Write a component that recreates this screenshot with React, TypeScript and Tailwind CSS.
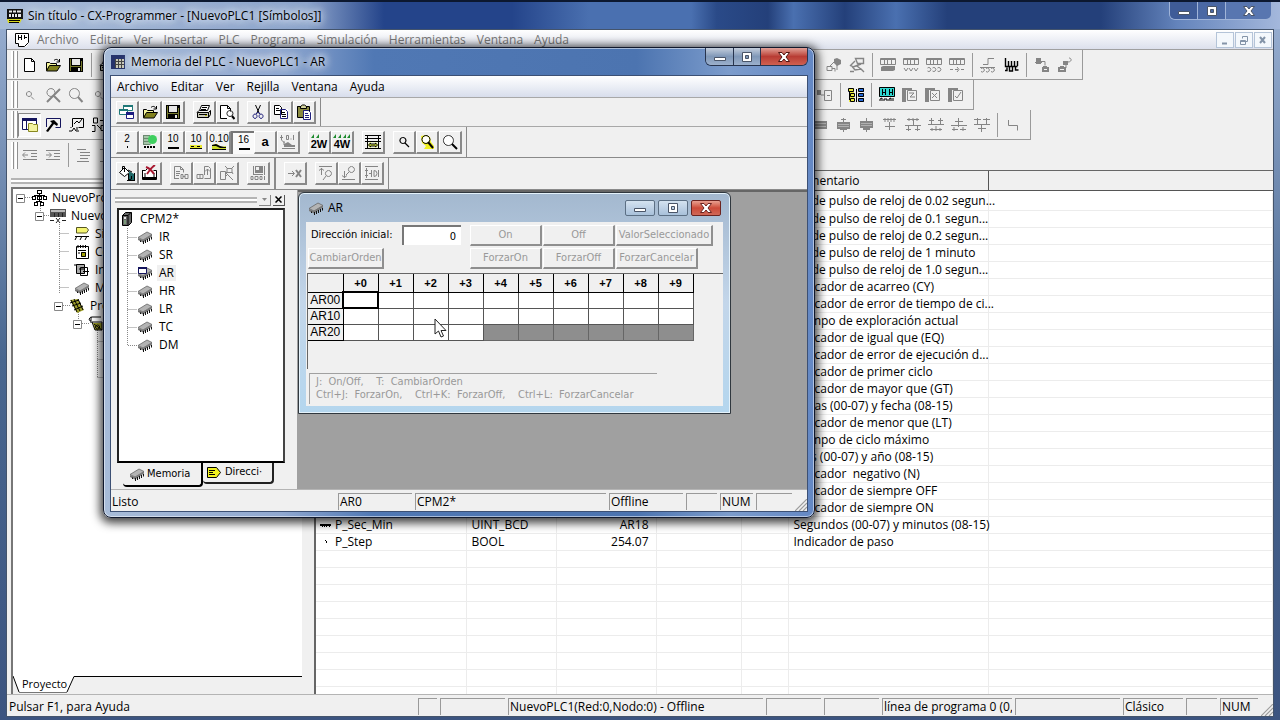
import React from "react";

type Layer = ["s" | "f", string, string, number?];

function Glyph({ layers, size = 16 }: { layers: Layer[]; size?: number }) {
  return (
    <svg width={size} height={size} viewBox="0 0 16 16" className="shrink-0" aria-hidden="true">
      {layers.map(([kind, color, d, w], i) =>
        kind === "s" ? (
          <path key={i} d={d} fill="none" stroke={color} strokeWidth={w ?? 1} />
        ) : (
          <path key={i} d={d} fill={color} />
        ),
      )}
    </svg>
  );
}

const K = "#000";
const G = "#858585";

const icons: Record<string, Layer[]> = {
  app: [
    ["f", "#111", "M0 1h16v10h-16z"],
    ["f", "#e8e8e8", "M2 2.500h3v2h-3zM6 2.500h3v2h-3zM10 2.500h4v2h-4zM2 6h12v3h-12z"],
    ["f", K, "M4 6h1v3h-1zM7 6h1v3h-1zM10 6h1v3h-1z"],
    ["f", "#d8d820", "M0 11h15l-2 4h-12z"],
    ["s", K, "M2 12.500h11M2 14.500h10"],
  ],
  ladder: [
    ["f", "#fff", "M1 1h14v10l-3 4h-8v-3h-3z"],
    ["s", K, "M1.500 11.500v-10h13v9l-4 4h-6v-3zM4.500 3v5M7.500 3v5M10.500 3v4M4 5.500h4M10 5.500h3"],
  ],
  grid: [
    ["f", "#26336b", "M1 1h14v14h-14z"],
    ["f", "#c8c8b8", "M2 5h12v9h-12z"],
    ["s", "#444", "M5.500 5v9M8.500 5v9M11.500 5v9M2 7.500h12M2 10.500h12"],
    ["f", "#26336b", "M2 5h3v9h-3z"],
  ],
  doc: [
    ["f", "#fff", "M3 1h7l3 3v11h-10z"],
    ["s", K, "M2.500 1.500h7l3 3v10h-10zM9.500 1.500v3h3"],
  ],
  open: [
    ["s", K, "M9 3.500c2-2 4-1 5 1M14.500 2v3h-3"],
    ["f", "#f4f49a", "M1 6h4l1 1h6v7h-11z"],
    ["s", K, "M1.500 13.500v-8h3l1 1h6v2"],
    ["f", "#80801c", "M4 9h11l-3 5h-11z"],
    ["s", K, "M4.500 8.500h11l-3.500 5.500h-10.500z"],
  ],
  save: [
    ["f", K, "M1 1h14v14h-14z"],
    ["f", "#777a2c", "M2 2h1v12h-1zM13 4h1v10h-1zM2 9h12v1h-12z"],
    ["f", "#e6e6e6", "M4 2h8v6h-8zM10 11h2v3h-2z"],
  ],
  print: [
    ["f", "#fff", "M5 1h8l-2 6h-8z"],
    ["s", K, "M5.500 1.500h8l-2 5h-8zM6 3.500h5M5 5.500h5"],
    ["f", "#c8c8b8", "M1 8h12l2-2v5l-3 3h-11z"],
    ["s", K, "M1.500 8.500h11v5h-11zM12.500 8.500l2-2v4l-2 3M3 10.500h8M3 6.500l-2 2"],
    ["f", "#b4b400", "M9 11h2v1h-2z"],
  ],
  preview: [
    ["f", "#fff", "M2 1h7l3 3v11h-10z"],
    ["s", K, "M8 14.500h-6.500v-13h7l3 3v3M8.500 1.500v3h3"],
    ["s", "#222", "M11 6.500a3 3 0 1 1-.1 0"],
    ["s", K, "M13 12l2.500 3", 2],
  ],
  cut: [
    ["s", K, "M5.500 1l4 9M10.500 1l-4 9"],
    ["s", "#20207c", "M5 10a2 2.200 0 1 0 .1 0M11 10a2 2.200 0 1 0 .1 0M6 10l2-2 2 2"],
  ],
  copy: [
    ["f", "#fff", "M1 2h8v9h-8zM7 5h8v9h-8z"],
    ["s", K, "M1.500 1.500h5l2 2v7h-7zM3 4.500h3M3 6.500h4"],
    ["s", "#20207c", "M7.500 5.500h5l2 2v7h-7z"],
    ["s", K, "M9 8.500h3M9 10.500h4M9 12.500h4"],
  ],
  paste: [
    ["f", "#8a8a40", "M1 2h12v11h-12z"],
    ["s", K, "M1.500 2.500h12v11h-12z"],
    ["f", "#d8d8a0", "M5 1h5v3h-5z"],
    ["s", K, "M4.500 4.500v-2l2-1.500h2l2 1.500v2z"],
    ["f", "#fff", "M8 7h8v9h-8z"],
    ["s", "#20207c", "M7.500 6.500h5l2 2v7h-7zM9 9.500h3M9 11.500h4M9 13.500h4"],
  ],
  windows: [
    ["f", "#fff", "M4 1h9v6h-9zM0 6h8v5h-8zM8 9h7v6h-7z"],
    ["s", "#1f7878", "M4.500 1.500h9v5h-9zM.5 5.500h8v5h-8z"],
    ["f", "#1f7878", "M4 1h10v2h-10zM0 5h9v2h-9z"],
    ["s", "#1c1c80", "M7.500 8.500h7v6h-7z"],
    ["f", "#1c1c80", "M7 8h8v3h-8z"],
  ],
  led: [
    ["f", "#a4c4a8", "M1 2h8v9h-8z"],
    ["s", "#6c8870", "M1 1.500h7M2 4.500h6M2 7.500h6M1 10.500h7M1.500 2v8"],
    ["f", "#3fcf5f", "M10.500 1a4.500 4.500 0 1 1 0 9a4.500 4.500 0 1 1 0-9"],
    ["f", K, "M2 12h2v2h-2zM5 12h2v2h-2zM8 12h2v2h-2zM11 12h2v2h-2z"],
  ],
  chart: [
    ["s", G, "M1.500 1v5l3 3M0 3.500h3M6.500 1.500h2v4h-2zM10.500 5h1M13.500 1v5"],
    ["s", G, "M4 7v4M2 14.500h13"],
    ["f", G, "M4 10l4-2 4 3h3v2h-11z"],
  ],
  fit: [
    ["s", K, "M0 1.500h16M0 4.500h16M2.500 1v13M13.500 1v13M0 14.500h16M0 7.500h16"],
    ["f", "#eef2d8", "M3 8h10v6h-10z"],
    ["f", "#d8e840", "M3 11l3-3v2h4v-2l3 3-3 3v-2h-4v2z"],
    ["s", K, "M3.500 11l2-2v1h5v-1l2 2-2 2v-1h-5v1z"],
  ],
  zoomS: [["s", K, "M7 3.500a3 3 0 1 1-.1 0M9 9l4 4", 1.2]],
  zoomY: [
    ["f", "#f0f020", "M2 2l5-1 4 2 1 5 3 4v3h-10l2-3-4-3z"],
    ["f", "#fff", "M7 2a3.500 3.500 0 1 1-.1 0"],
    ["s", K, "M7 1.500a4 4 0 1 1-.1 0"],
    ["s", K, "M9 8l5 6", 2],
  ],
  zoomL: [
    ["f", "#fff", "M6.500 1.500a5 5 0 1 1-.1 0"],
    ["s", "#333", "M6.500 1.500a5 5 0 1 1-.1 0"],
    ["s", K, "M10 10l5 5", 2],
  ],
  zoomSG: [["s", G, "M7 4.500a2.500 2.500 0 1 1-.1 0M9 9.500l3 3"]],
  zoomXG: [
    ["s", G, "M6 1.500a4 4 0 1 1-.1 0"],
    ["s", G, "M2 15l13-13M8 8l7 7", 2],
  ],
  zoomLG: [
    ["s", G, "M6.500 1.500a5 5 0 1 1-.1 0"],
    ["s", G, "M10 10l4.500 5", 2],
  ],
  paint: [
    ["f", "#fff", "M1 7l5-5 5 5-5 5z"],
    ["s", K, "M.5 7.500l5-5 5 5-5 4zM5.500 7v-5.500h-2v3"],
    ["f", "#1f6868", "M10 6l5 3v6h-5z"],
    ["s", K, "M8 15.500h8M15.500 8v7M9.500 9v6l3-1v-3M9 5l4 2"],
  ],
  erase: [
    ["f", "#fff", "M1 5h13v9h-13z"],
    ["s", K, "M.5 5.500h3l2-2M.5 5v9.500h14v-9h-3M3 8v4M12 8v4"],
    ["f", K, "M1 12h13v3h-13z"],
    ["s", "#a81830", "M4 2c3 1 6 4 8 7M13 0c-3 2-6 6-8 9", 2],
  ],
  docGlasses: [
    ["s", G, "M1.500 13.500v-12h6l3 3v3M7.500 1.500v3h3M3 6.500h4M3 8.500h4M3 10.500h3M1 13.500h5M8 9.500h2v4h-2zM12 9.500h3v4h-3zM10 11.500h2"],
  ],
  docUp: [["s", G, "M8.500 10v-8.500h4l2 2v10h-6M11.500 4v6M9 6.500l2.500-2.500 2.500 2.500M1 9.500h6v4h-6zM4 9v4"]],
  docX: [["s", G, "M1.500 14.500v-8h5v8zM7 7.500h3M7 8l7 7M8 3.500h5v4h-5zM6 1l2 2M15 1l-2 2M6 12l3-3M14 9l-1-2"]],
  monitorG: [
    ["f", G, "M5 1h8v7h-8z"],
    ["s", G, "M3.500 1v8M3 9.500h10M14.500 1v9M1 11.500h2v3h-2zM5 11.500h3v3h-3zM10 11.500h2v3h-2zM14.500 11v4"],
    ["f", "#f0f0f0", "M6 2h3v3h-3z"],
  ],
  toX: [["s", G, "M1 8.500h6M5 6l2.500 2.500-2.500 2.500"], ["s", G, "M9 5l5 7M14 5l-5 7", 2]],
  topFind: [["s", G, "M1 1.500h13M3.500 3v7M1 5.500l2.500-2 2.500 2M10.500 5.500a3 3 0 1 1-.1 0M8 11l-3 4"]],
  botFind: [["s", G, "M1 14.500h13M3.500 6v7M1 10.500l2.500 2 2.500-2M10.500 1.500a3 3 0 1 1-.1 0M8 7l-3 3"]],
  bothFind: [["s", G, "M1 1.500h13M1 14.500h13M2.500 3v10M1 5.500h3M1 10.500h3M5 8.500h2M7.500 5v7M10 5.500a3 3 0 1 1 0 6zM14.500 5v7"]],
  wnd: [
    ["f", "#fff", "M1 1h13v12h-13z"],
    ["s", "#14145c", "M.5 1.500h14v11h-14zM4.500 4v9"],
    ["f", "#14145c", "M0 1h15v3h-15z"],
    ["f", "#f4f4a0", "M7 7h4l1 1h4v7h-9z"],
    ["s", "#888820", "M6.500 14.500v-8h4l1 1h4v7z"],
  ],
  hammer: [
    ["s", "#14145c", "M1.500 10v-8.500h14v9h-5"],
    ["f", K, "M5 4l4-1 4 4-1 2-3-2-6 8-2-1 6-8z"],
  ],
  plot: [["s", K, "M4.500 10v-8.500h11v9h-5M6 7l3-3 2 2 3-4M1 14h3l2-3 2 3h3M3 11v-1M9 10v3"]],
  links: [["s", K, "M2.500 1v5h4v-5zM1 8.500h3v6h-3M9 3.500h5v5M6 8l4 4M10 8.500h5v5h-5z"]],
  outdent: [["s", G, "M1 8h5M3 5.500l-2.500 2.500 2.500 2.500M1 3.500h14M9 6.500h6M9 9.500h6M1 12.500h14"]],
  indent: [["s", G, "M1 8h5M4 5.500l2.500 2.500-2.500 2.500M1 3.500h14M9 6.500h6M9 9.500h6M1 12.500h14"]],
  lines: [["s", G, "M1 2.500h9M4 5.500h10M4 8.500h10M4 11.500h8M1 14.500h12"]],
  tool1: [
    ["f", G, "M8 2l3-1 4 2v4l-4 2-3-3z"],
    ["s", G, "M1 9.500h5v4h-5zM6 11.500h3v3M4 9l5-5M11 8v5"],
  ],
  tool2: [["s", G, "M6.500 1.500h8v5h-6zM1 9l5-5M2 8l4 5 6-1 3 3M4 10l8-3M1 14.500h4M8 9l5 4", 1.4]],
  plcG1: [["s", G, "M.5 1.500h15v6h-15zM4.500 3v4M7.500 3v4M11.500 3v4M1 2.500h14"], ["f", G, "M1 10l2-1h12v4l-2 1h-12z"]],
  plcG2: [["s", G, "M.5 1.500h15v6h-15zM4.500 3v4M7.500 3v4M11.500 3v4M1 2.500h14M1 11l2 3 2-3M6 11l2 3 2-3M11 11l2 3 2-3"]],
  plcG3: [["s", G, "M.5 1.500h15v6h-15zM4.500 3v4M7.500 3v4M11.500 3v4M1 2.500h14M1.500 11a2 2 0 1 1 0 3M6.500 11a2 2 0 1 1 0 3M11.500 11a2 2 0 1 1 0 3"]],
  plcG4: [["s", G, "M.5 1.500h15v6h-15zM4.500 3v4M7.500 3v4M11.500 3v4M1 2.500h14M1 12.500h3M6 12.500h3M8 10l2 2.500-2 2.500M12 12.500h3"]],
  stepG: [["s", G, "M3 7.500h5v-6h6M1 11.500a2 2 0 1 1 0 3M6 11.500a2 2 0 1 1 0 3M11 11.500a2 2 0 1 1 0 3M0 10.500h15"]],
  wave: [["s", K, "M2.500 1v8.500h12M5.500 4v5M8.500 4v5M11.500 4v5M14.500 4v5M2 13.500h2v-3M6.500 10v4h3v-4M12.500 10v3h3", 1.4]],
  tool3: [["f", G, "M2 1h5v6h-5zM8 10h7v5h-7z"], ["s", G, "M1 5.500h7M7 4.500h4v4M9 9.500h4"], ["s", "#f0f0f0", "M10 12.500h3"]],
  tool4: [["f", G, "M6 4h5v4h-5zM1 10h8v5h-8z"], ["s", G, "M11 5c4 0 4-4 1-4M9 8v3M3 9.500h4"], ["s", "#f0f0f0", "M3 12.500h4"]],
  arrowDoc: [["f", G, "M0 3h4v5h-4z"], ["s", G, "M7.500 3.500h7v10h-7zM4 8h4M10 8.500h3"]],
  tree: [
    ["f", "#e8e840", "M1 1h5v14h-5z"],
    ["s", K, "M.5 1.500h5v3h-5zM2.500 6.500h4v3h-4zM2.500 11.500h4v3h-4zM1.500 4v9M8.500 2v13"],
    ["f", "#2468d8", "M11 1h5v4h-5zM11 6h5v4h-5zM11 11h5v4h-5z"],
    ["s", K, "M10.500 1.500h5v3h-5zM10.500 6.500h5v3h-5zM10.500 11.500h5v3h-5z"],
  ],
  hh: [
    ["f", "#30d8d0", "M0 0h16v10h-16z"],
    ["s", K, "M3.500 2v6M6.500 2v6M10.500 2v6M13.500 2v6M3 5.500h4M10 5.500h4M.5 .5h15v9h-15zM1 14v-2l2-1v3M5 14v-2h3v2M10 14v-2l2-1v3M14 14v-3"],
  ],
  docZ: [["f", G, "M0 1h10v2h-6v12h-4z"], ["s", G, "M5.500 3.500h9v10h-9zM7 6h5l-4 4h5"]],
  docXX: [["f", G, "M0 1h10v2h-6v12h-4z"], ["s", G, "M5.500 3.500h9v10h-9zM7 6l5 5M12 6l-5 5"]],
  docV: [["f", G, "M0 1h10v2h-6v12h-4z"], ["s", G, "M5.500 3.500h9v10h-9zM7 9l2 2 4-6"]],
  chipG: [["f", G, "M1 4h13v8h-13z"], ["s", "#ccc", "M2 6.500h11M2 9.500h11", 0.6]],
  chipG2: [["f", G, "M1 5h13v7h-13zM7 1h1v14h-1zM5 2h5v1h-5zM4 12h7v1h-7z"], ["s", "#ccc", "M2 7.500h11M2 9.500h11", 0.6]],
  chipG3: [["f", G, "M1 4h13v7h-13zM7 1h1v14h-1zM4 11h7v2h-7z"], ["s", "#ccc", "M2 6.500h11M2 8.500h11", 0.6]],
  rungA: [["s", G, "M1 2.500h13M3 1v4M6 1v4M9 1v4M12 1v4M7.500 5v8M3 9.500h10"]],
  rungB: [["s", G, "M2 2.500h12M4 1v3M8 1v3M12 1v3M8.500 3v5M0 8.500h16M3.500 8v6M12.500 8v6M1 12.500h5M10 12.500h5"]],
  rungC: [["s", G, "M3.500 1v6M12.500 1v6M1 3.500h5M10 3.500h5M0 7.500h16M2 12.500h12M4 11v3M8 9v5M12 11v3"]],
  rungD: [["s", G, "M7.500 1v9M4 4.500h8M0 8.500h16M1 12.500h6M9 12.500h6M3 10v4M12 10v4"]],
  rungE: [["s", G, "M0 2.500h7M9 2.500h7M3.500 1v6M12.500 1v6M0 7.500h16M7.500 8v7M4 11.500h8"]],
  corner: [["s", G, "M3.500 3v5.500h9v5"]],
};

function MemChip({ open = false }: { open?: boolean }) {
  return (
    <svg width="16" height="16" viewBox="0 0 16 16" className="shrink-0" aria-hidden="true">
      <path d="M1 8.500L10 3L15 5.500L6 11Z" fill="#b4b4b4" stroke="#666" strokeWidth=".8" />
      <path d="M1 9v2l5 2.500v-2.500zM6 11l9-5.500v2l-9 6z" fill="#777" />
      <path d="M6.500 12v3M8.500 11v3M10.500 10v3M12.500 9v3M14.500 8v2.500M3.500 11.500v1.500" stroke="#111" />
      {open && <path d="M1.500 2.500h8v6h-8z" fill="#fff" stroke="#14145c" />}
      {open && <path d="M1 2h9v2h-9z" fill="#14145c" />}
    </svg>
  );
}

/* ---------- window caption buttons ---------- */

function CaptionGlyph({ kind, tint = "#4a5568" }: { kind: string; tint?: string }) {
  return (
    <svg width="14" height="12" viewBox="0 0 14 12" aria-hidden="true">
      {kind === "min" && <path d="M1.500 6.500h11v3h-11z" fill="#fff" stroke={tint} />}
      {kind === "max" && (
        <path d="M2.500 1.500h9v9h-9zM5.500 4.500v3h3v-3z" fill="#fff" fillRule="evenodd" stroke={tint} />
      )}
      {kind === "close" && (
        <path d="M1.500 1.500h3.500l2 2.500 2-2.500h3.500l-3.500 4.500 3.500 4.500h-3.500l-2-2.500-2 2.500h-3.500l3.500-4.500z" fill="#fff" stroke={tint} />
      )}
    </svg>
  );
}

/* ---------- toolbar parts ---------- */

function FlatTool({ name, pressed = false }: { name: string; pressed?: boolean }) {
  return (
    <button
      aria-label={name}
      className={
        pressed
          ? "flex h-6 w-[23px] shrink-0 items-center justify-center border border-r-white border-b-white border-t-[#888] border-l-[#888] bg-[#f8f8f8]"
          : "flex h-6 w-[23px] shrink-0 items-center justify-center"
      }
    >
      <Glyph layers={icons[name]} />
    </button>
  );
}

function Sep() {
  return <span className="mr-[3px] ml-1 h-6 w-px shrink-0 bg-[#9a9a9a]" />;
}

function Grip() {
  return (
    <span className="flex h-[27px] shrink-0 gap-px pl-1">
      <span className="w-[3px] border-r border-[#909090] bg-white" />
      <span className="w-[3px] border-r border-[#909090] bg-white" />
    </span>
  );
}

function MainBar({
  left,
  right,
  pad,
}: {
  left: (string | null)[];
  right: (string | null)[];
  pad: string;
}) {
  return (
    <div className="flex h-[30px] shrink-0 items-stretch">
      <div className={`flex shrink-0 items-center border-b border-[#9a9a9a] ${pad}`}>
        <Grip />
        {left.map((n, i) => (n === null ? <Sep key={i} /> : <FlatTool key={i} name={n} pressed={n === "wnd"} />))}
      </div>
      <div className="flex shrink-0 items-center border-r border-b border-[#9a9a9a] pr-1.5">
        {right.map((n, i) => (n === null ? <Sep key={i} /> : <FlatTool key={i} name={n} />))}
      </div>
    </div>
  );
}

function RaisedTool({
  label,
  pressed = false,
  children,
}: {
  label: string;
  pressed?: boolean;
  children: React.ReactNode;
}) {
  return (
    <button
      aria-label={label}
      className={
        pressed
          ? "flex h-[23px] w-[23px] shrink-0 items-center justify-center border-t-2 border-l-2 border-[#777] bg-[#fafafa]"
          : "flex h-[23px] w-[23px] shrink-0 items-center justify-center border-t border-r-2 border-b-2 border-l border-t-white border-r-[#8a8a8a] border-b-[#8a8a8a] border-l-white bg-[#f0f0f0]"
      }
    >
      {children}
    </button>
  );
}

function IconTool({ name }: { name: string }) {
  return (
    <RaisedTool label={name}>
      <Glyph layers={icons[name]} />
    </RaisedTool>
  );
}

function NumTool({ text, mark, pressed = false }: { text: string; mark: string; pressed?: boolean }) {
  return (
    <RaisedTool label={`Formato ${text}`} pressed={pressed}>
      <span className="flex flex-col items-center font-['Liberation_Sans'] text-[10px] leading-[10px] text-black">
        {text}
        <svg width="14" height="6" viewBox="0 0 14 6" aria-hidden="true">
          {mark === "dot" && <path d="M7 2h1v2h-1z" fill="#000" />}
          {mark === "bar" && <path d="M2 3h11v2h-11z" fill="#000" />}
          {mark === "sign" && (
            <>
              <path d="M1 1h12v3h-12z" fill="#e8e830" />
              <path d="M1 4h12v1h-12zM2 2h3v1h-3zM8 2h3v1h-3z" fill="#000" />
            </>
          )}
          {mark === "wave" && (
            <>
              <path d="M0 1l5-1 4 3 5-1v4h-14z" fill="#c8d828" />
              <path d="M0 1l4-1 4 2 4 1h2v1h-6l-4-2h-4zM0 5h14v1h-14z" fill="#000" />
            </>
          )}
        </svg>
      </span>
    </RaisedTool>
  );
}

function WordTool({ text, teeth }: { text: string; teeth: string }) {
  return (
    <RaisedTool label={text}>
      <span className="flex flex-col items-center font-['Liberation_Sans'] text-[11px] font-bold leading-[11px] text-black">
        <svg width="18" height="5" viewBox="0 0 18 5" aria-hidden="true">
          <path d={teeth} fill="#1c8a2c" />
        </svg>
        {text}
      </span>
    </RaisedTool>
  );
}

function StatusCell({ w, children }: { w: string; children?: React.ReactNode }) {
  return (
    <span
      className={`h-[17px] shrink-0 overflow-hidden border-t border-l border-[#9a9a9a] pl-px leading-4 whitespace-nowrap ${w}`}
    >
      {children}
    </span>
  );
}

function SizeGrip() {
  return (
    <svg width="12" height="12" viewBox="0 0 12 12" className="shrink-0 self-end" aria-hidden="true">
      <path d="M0 12L12 0M4 12L12 4M8 12L12 8" stroke="#9c9c9c" strokeWidth="1.200" />
    </svg>
  );
}

/* ---------- data ---------- */

type Symbol = { note: string; name?: string; type?: string; addr?: string; word?: boolean };

const symbols: Symbol[] = [
  { note: "Bit de pulso de reloj de 0.02 segun..." },
  { note: "Bit de pulso de reloj de 0.1 segun..." },
  { note: "Bit de pulso de reloj de 0.2 segun..." },
  { note: "Bit de pulso de reloj de 1 minuto" },
  { note: "Bit de pulso de reloj de 1.0 segun..." },
  { note: "Indicador de acarreo (CY)" },
  { note: "Indicador de error de tiempo de ci..." },
  { note: "Tiempo de exploración actual" },
  { note: "Indicador de igual que (EQ)" },
  { note: "Indicador de error de ejecución d..." },
  { note: "Indicador de primer ciclo" },
  { note: "Indicador de mayor que (GT)" },
  { note: "Horas (00-07) y fecha (08-15)" },
  { note: "Indicador de menor que (LT)" },
  { note: "Tiempo de ciclo máximo" },
  { note: "Mes (00-07) y año (08-15)" },
  { note: "Indicador\u00a0 negativo (N)" },
  { note: "Indicador de siempre OFF" },
  { note: "Indicador de siempre ON" },
  { note: "Segundos (00-07) y minutos (08-15)", name: "P_Sec_Min", type: "UINT_BCD", addr: "AR18", word: true },
  { note: "Indicador de paso", name: "P_Step", type: "BOOL", addr: "254.07" },
];

const blankRows = Array.from({ length: 9 }, (_, i) => i);
const cell = "border-r border-b border-[#ececec] p-0 whitespace-nowrap";

function SymbolTable() {
  return (
    <table className="w-full table-fixed border-collapse text-left">
      <colgroup>
        <col className="w-[150px]" />
        <col className="w-[90px]" />
        <col className="w-[100px]" />
        <col className="w-[85px]" />
        <col className="w-[47px]" />
        <col className="w-[200px]" />
        <col />
      </colgroup>
      <thead>
        <tr className="h-[19px] bg-[#f0f0f0]">
          {["", "", "", "", "", "Comentario", ""].map((h, i) => (
            <th
              key={i}
              className={
                i < 6
                  ? "border-r border-b border-[#555] py-0 pt-0.5 pl-[5px] leading-4 font-normal whitespace-nowrap"
                  : "border-b border-[#555] p-0"
              }
            >
              {h}
            </th>
          ))}
        </tr>
      </thead>
      <tbody>
        <tr className="h-[3px]">
          <td colSpan={7} className="p-0" />
        </tr>
        {symbols.map((s) => (
          <tr key={s.note} className="h-[17px] leading-4">
            <td className={cell}>
              <span className="flex items-center">
                <svg width="19" height="16" viewBox="0 0 19 16" aria-hidden="true">
                  {s.word ? (
                    <path d="M4 7h11v2h-1v1h-1v-1h-2v1h-1v-1h-1v1h-1v-1h-1v1h-1v-1h-2z" fill="#000" />
                  ) : (
                    <path d="M9 6h1v1h-1zM10 7h1v2h-1z" fill="#000" />
                  )}
                </svg>
                {s.name}
              </span>
            </td>
            <td className={`${cell} pl-[5px]`}>{s.type}</td>
            <td className={`${cell} pr-[7px] text-right`}>{s.addr}</td>
            <td className={cell} />
            <td className={cell} />
            <td className={`${cell} pl-[5px]`}>{s.note}</td>
            <td className={cell} />
          </tr>
        ))}
        {blankRows.map((r) => (
          <tr key={r} className="h-[17px]">
            {[0, 1, 2, 3, 4, 5, 6].map((c) => (
              <td key={c} className={cell} />
            ))}
          </tr>
        ))}
      </tbody>
    </table>
  );
}

/* ---------- project tree ---------- */

function Expander() {
  return (
    <svg width="9" height="9" viewBox="0 0 9 9" className="shrink-0" aria-hidden="true">
      <path d="M.5.5h8v8h-8z" fill="#fff" stroke="#888" />
      <path d="M2 4.500h5" stroke="#000" />
    </svg>
  );
}

const projectRows: [string, string, boolean, string][] = [
  ["pl-[3px]", "NuevoPro", true, "net"],
  ["pl-[22px]", "Nuevo", true, "plc"],
  ["pl-[42px]", "Sím", false, "sym"],
  ["pl-[42px]", "Con", false, "cfg"],
  ["pl-[42px]", "Inst", false, "ins"],
  ["pl-[42px]", "Me", false, "mem"],
  ["pl-[41px]", "Prog", true, "prg"],
  ["pl-[60px]", "", true, "task"],
];

function ProjectIcon({ kind }: { kind: string }) {
  if (kind === "mem") return <MemChip />;
  const art: Record<string, Layer[]> = {
    net: [
      ["f", K, "M6 0h5v4h-5zM1 6h4v4h-4zM6 6h5v4h-5zM12 6h4v4h-4zM3 12h4v4h-4zM9 12h4v4h-4z"],
      ["f", "#fff", "M7 1h3v2h-3zM2 7h2v2h-2zM7 7h3v2h-3zM13 7h2v2h-2zM4 13h2v2h-2zM10 13h2v2h-2z"],
      ["s", K, "M3 5.500h11M8.500 4v8M5 11.500h6"],
    ],
    plc: [
      ["f", "#555", "M0 1h16v8h-16z"],
      ["f", "#bbb", "M1 2h14v2h-14z"],
      ["s", "#222", "M4.500 5v4M8.500 5v4M12.500 5v4M0 12.500h4M12 12.500h4M6 10l4 5M10 10l-4 5"],
    ],
    sym: [
      ["f", "#f4f470", "M3 1h9l2 3-2 3h-9z"],
      ["s", "#555520", "M2.500 1.500h10l2 2.500-2 3h-10z"],
      ["s", K, "M1 10.500h14M3 10l-2 4M8 10l-2 4M13 10l-2 4"],
    ],
    cfg: [
      ["f", "#fff", "M2 2h12v13h-12z"],
      ["s", K, "M2.500 2.500h12v12h-12zM4 1v3M6.500 1v3M9 1v3M11.500 1v3M4 6.500h8M4 9h2"],
      ["f", "#a0a000", "M7 8h5v5h-5z"],
      ["s", K, "M7.500 8.500h4v4h-4z"],
    ],
    ins: [
      ["f", "#aaa", "M3 3h8v9h-8z"],
      ["s", K, "M2.500 2.500h8v9h-8zM6.500 5.500h7v8h-7zM0 3h3M9 9.500h6M5 7h6"],
    ],
    prg: [
      ["f", "#a0a028", "M1 2l8-1 6 11-7 3z"],
      ["s", K, "M2 2l6 12M5 1l6 12M9 1l5 11M1 5l9-3M3 8l9-3M5 12l9-4"],
    ],
    task: [
      ["s", K, "M3 5c-3 0-2-4 1-4h9M3 1v6"],
      ["f", "#a0a028", "M5 7h9v7h-7z"],
      ["s", K, "M4 6l3 8h7v-8zM9.500 9a2 2 0 1 0 .1 0M6 8l8 6"],
    ],
  };
  return <Glyph layers={art[kind]} />;
}

function ProjectTree() {
  return (
    <ul className="relative flex-1 overflow-hidden">
      <svg width="100" height="200" className="absolute top-0 left-0" aria-hidden="true">
        <path
          d="M12 8.500h8M27.500 15v10M31 26.500h8M46.500 35v70M46.500 44.500h10M46.500 62.500h10M46.500 80.500h10M46.500 98.500h10M50 116.500h8M65.500 123v8M69 134.500h8M84.500 141v48M84.500 152.500h8M84.500 170.500h8M84.500 188.500h8"
          fill="none"
          stroke="#888"
          strokeDasharray="1 1"
        />
      </svg>
      {projectRows.map(([pad, label, expands, icon]) => (
        <li key={icon} className={`relative flex h-[18px] items-center whitespace-nowrap ${pad}`}>
          {expands ? <Expander /> : <span className="w-[13px]" />}
          <span className="mr-[5px] ml-1.5 flex">
            <ProjectIcon kind={icon} />
          </span>
          {label}
        </li>
      ))}
    </ul>
  );
}

/* ---------- AR window ---------- */

function DisabledButton({ w, children }: { w: string; children: React.ReactNode }) {
  return (
    <button
      disabled
      className={`flex h-[21px] shrink-0 items-center justify-center border-t border-r-2 border-b-2 border-l border-t-white border-r-[#8f8f8f] border-b-[#8f8f8f] border-l-white bg-[#f0f0f0] leading-4 whitespace-nowrap text-[#999] ${w}`}
    >
      {children}
    </button>
  );
}

const offsets = [0, 1, 2, 3, 4, 5, 6, 7, 8, 9];

function ArWindow() {
  return (
    <section className="absolute top-0 left-0 w-[433px] rounded-t-md border border-[#30383f] bg-linear-to-b from-[#a3b8cf] via-[#c3d6ea] to-[#b4d6ee] px-[7px] pb-[7px] shadow-[inset_0_0_0_1px_#e4f2fb]">
      <header className="flex h-[29px] items-center">
        <span className="mr-1 ml-0.5 flex">
          <MemChip />
        </span>
        <h2 className="flex-1 text-[12px] text-black">AR</h2>
        <div className="mr-0.5 flex gap-[3px]">
          <button aria-label="Minimizar AR" className="flex h-4 w-[30px] items-center justify-center rounded-xs border border-[#5c6f84] bg-linear-to-b from-[#d4e2f0] to-[#a8c0da]">
            <CaptionGlyph kind="min" />
          </button>
          <button aria-label="Maximizar AR" className="flex h-4 w-[30px] items-center justify-center rounded-xs border border-[#5c6f84] bg-linear-to-b from-[#d4e2f0] to-[#a8c0da]">
            <CaptionGlyph kind="max" />
          </button>
          <button aria-label="Cerrar AR" className="flex h-4 w-[30px] items-center justify-center rounded-xs border border-[#6c2420] bg-linear-to-b from-[#e8a090] via-[#cc4a38] to-[#d06858]">
            <CaptionGlyph kind="close" tint="#6c2420" />
          </button>
        </div>
      </header>
      <div className="bg-[#f0f0f0] pt-[3px] pb-0.5 pl-px font-['DejaVu_Sans_Condensed','DejaVu_Sans',sans-serif] text-[11px]">
        <div className="flex h-[23px] items-start">
          <label htmlFor="start" className="w-[95px] pl-1 leading-5 text-black">
            Dirección inicial:
          </label>
          <input
            id="start"
            defaultValue="0"
            className="mr-[9px] h-[20px] w-[59px] border-t-2 border-l-2 border-[#777] bg-white pr-[5px] text-right text-black"
          />
          <div className="flex gap-px">
            <DisabledButton w="w-[72px]">On</DisabledButton>
            <DisabledButton w="w-[72px]">Off</DisabledButton>
            <DisabledButton w="w-[97px]">ValorSeleccionado</DisabledButton>
          </div>
        </div>
        <div className="flex h-[25px] items-start pl-px">
          <DisabledButton w="w-[76px]">CambiarOrden</DisabledButton>
          <div className="ml-[86px] flex gap-px">
            <DisabledButton w="w-[72px]">ForzarOn</DisabledButton>
            <DisabledButton w="w-[72px]">ForzarOff</DisabledButton>
            <DisabledButton w="w-[82px]">ForzarCancelar</DisabledButton>
          </div>
        </div>
        <div className="h-24 border-t border-l border-[#666]">
          <table className="table-fixed border-collapse font-['Liberation_Sans',sans-serif] text-[12px] text-black">
            <thead>
              <tr className="h-[18px]">
                <th className="w-[35px] border-r border-b border-black p-0" />
                {offsets.map((o) => (
                  <th key={o} className="w-[35px] border-r border-b border-black p-0 text-[11px] leading-4 font-bold">
                    +{o}
                  </th>
                ))}
              </tr>
            </thead>
            <tbody>
              {["AR00", "AR10", "AR20"].map((r, i) => (
                <tr key={r} className="h-4">
                  <th className="border-r border-b border-black p-0 text-center leading-[15px] font-normal">{r}</th>
                  {offsets.map((o) => (
                    <td
                      key={o}
                      className={
                        i === 0 && o === 0
                          ? "border-r border-b border-[#555] bg-white p-0 outline-2 -outline-offset-1 outline-black"
                          : i === 2 && o > 3
                            ? "border-r border-b border-[#666] bg-[#8e8e8e] p-0"
                            : "border-r border-b border-[#555] bg-white p-0"
                      }
                    />
                  ))}
                </tr>
              ))}
            </tbody>
          </table>
        </div>
        <div className="mt-1 ml-0.5 h-[31px] w-[348px] border-t border-l border-[#a0a0a0] pl-1.5 leading-[13px] whitespace-pre text-[#999]">
          <p className="pt-px">{"J:  On/Off,    T:  CambiarOrden"}</p>
          <p>{"Ctrl+J:  ForzarOn,    Ctrl+K:  ForzarOff,    Ctrl+L:  ForzarCancelar"}</p>
        </div>
      </div>
    </section>
  );
}

/* ---------- PLC memory window ---------- */

function MemoryWindow() {
  const areas = ["IR", "SR", "AR", "HR", "LR", "TC", "DM"];
  return (
    <section className="absolute top-[47px] left-[103px] flex w-[712px] flex-col rounded-lg border border-[#10182c] bg-[linear-gradient(90deg,#a8bcd8_0%,#90a8d0_25%,#5078b4_38%,#4c74b0_75%,#7c9ccc_88%,#6488c4_100%)] px-1.5 pb-[5px] shadow-[0_2px_10px_3px_rgba(0,0,0,0.75),inset_0_0_0_1px_rgba(255,255,255,0.5)]">
      <header className="flex h-[27px] items-center">
        <Glyph layers={icons.grid} />
        <h2 className="relative ml-[5px] flex-1 text-[12px] text-black [text-shadow:0_0_8px_#fff,0_0_8px_#fff,0_0_12px_#fff]">
          Memoria del PLC - NuevoPLC1 - AR
        </h2>
        <div className="flex h-[18px] self-start overflow-hidden rounded-b-md border border-t-0 border-[#27344e]">
          <button aria-label="Minimizar memoria" className="flex w-7 items-center justify-center border-r border-[#27344e] bg-linear-to-b from-[#c4cedc] via-[#8098b8] to-[#9cb0cc]">
            <CaptionGlyph kind="min" />
          </button>
          <button aria-label="Maximizar memoria" className="flex w-[27px] items-center justify-center border-r border-[#27344e] bg-linear-to-b from-[#c4cedc] via-[#8098b8] to-[#9cb0cc]">
            <CaptionGlyph kind="max" />
          </button>
          <button aria-label="Cerrar memoria" className="flex w-[46px] items-center justify-center bg-linear-to-b from-[#e0a098] via-[#b83c34] to-[#d06050]">
            <CaptionGlyph kind="close" tint="#501410" />
          </button>
        </div>
      </header>
      <div className="flex flex-col border border-[#3c5074] bg-[#f0f0f0]">
        <nav className="flex h-[21px] items-center gap-3 bg-linear-to-b from-white to-[#d8deec] pl-1.5 text-black">
          {["Archivo", "Editar", "Ver", "Rejilla", "Ventana", "Ayuda"].map((m) => (
            <a key={m} href="#" className="leading-5">
              {m}
            </a>
          ))}
        </nav>
        <div className="flex h-[30px] border-t border-b border-t-[#a8a8a8] border-b-[#a8a8a8]">
          <div className="flex items-center gap-2 border-r border-[#8a8a8a] pr-1 pl-[5px]">
            <div className="flex">
              <IconTool name="windows" />
              <IconTool name="open" />
              <IconTool name="save" />
            </div>
            <div className="flex">
              <IconTool name="print" />
              <IconTool name="preview" />
            </div>
            <div className="flex">
              <IconTool name="cut" />
              <IconTool name="copy" />
              <IconTool name="paste" />
            </div>
          </div>
        </div>
        <div className="flex h-[31px] border-b border-[#8a8a8a]">
          <div className="flex items-center gap-2 border-r border-[#8a8a8a] pr-1 pl-[5px]">
            <div className="flex">
              <NumTool text="2" mark="dot" />
              <IconTool name="led" />
              <NumTool text="10" mark="bar" />
              <NumTool text="10" mark="sign" />
              <NumTool text="0.10" mark="wave" />
              <NumTool text="16" mark="bar" pressed />
              <RaisedTool label="ASCII">
                <span className="font-['Liberation_Sans'] text-[13px] leading-3 font-bold text-black">a</span>
              </RaisedTool>
              <IconTool name="chart" />
            </div>
            <div className="flex">
              <WordTool text="2W" teeth="M1 4l3-4v4zM6 4l3-4v4z" />
              <WordTool text="4W" teeth="M0 4l3-4v4zM5 4l3-4v4zM10 4l3-4v4zM14 4l3-4v4z" />
            </div>
            <IconTool name="fit" />
            <div className="flex">
              <IconTool name="zoomS" />
              <IconTool name="zoomY" />
              <IconTool name="zoomL" />
            </div>
          </div>
        </div>
        <div className="flex h-8 border-b border-[#8a8a8a]">
          <div className="flex items-center gap-2 border-r border-[#8a8a8a] pr-1 pl-[5px]">
            <div className="flex">
              <IconTool name="paint" />
              <IconTool name="erase" />
            </div>
            <div className="flex">
              <IconTool name="docGlasses" />
              <IconTool name="docUp" />
              <IconTool name="docX" />
            </div>
            <div className="flex self-stretch border-r-2 border-[#8a8a8a] pr-1">
              <div className="flex items-center">
                <IconTool name="monitorG" />
              </div>
            </div>
            <IconTool name="toX" />
            <div className="flex">
              <IconTool name="topFind" />
              <IconTool name="botFind" />
              <IconTool name="bothFind" />
            </div>
          </div>
        </div>

        <div className="flex h-[299px]">
          <aside className="flex w-[187px] shrink-0 flex-col border-r border-[#a0a0a0] pl-1">
            <div className="flex h-[18px] items-center pt-0.5 pr-3">
              <div className="mr-0.5 h-[6px] flex-1 border-y-2 border-[#b4b4b4] bg-white" />
              <button aria-label="Ocultar panel" className="mr-0.5 flex h-[11px] w-3 items-center justify-center border-r border-b border-[#888]">
                <svg width="5" height="3" viewBox="0 0 5 3" aria-hidden="true">
                  <path d="M0 0h5l-2.500 3z" fill="#888" />
                </svg>
              </button>
              <button aria-label="Cerrar panel" className="flex h-[11px] w-3 items-center justify-center border-r border-b border-[#555]">
                <svg width="7" height="7" viewBox="0 0 7 7" aria-hidden="true">
                  <path d="M.5.5l6 6M6.500.5l-6 6" stroke="#000" strokeWidth="1.500" />
                </svg>
              </button>
            </div>
            <div className="mr-3 ml-0.5 flex-1 overflow-hidden border-2 border-t-[#222] border-r-[#444] border-b-black border-l-[#222] bg-white">
              <div className="flex h-[18px] items-center pl-0.5 text-black">
                <svg width="10" height="14" viewBox="0 0 10 14" className="mr-2 ml-px" aria-hidden="true">
                  <path d="M.5 3.500l3-3h6v10l-3 3h-6z" fill="#666" stroke="#000" />
                  <path d="M.5 3.500h5.500v10M6 3.500l3-3" fill="none" stroke="#000" />
                  <path d="M2 5h2v2h-2z" fill="#e8e8e8" />
                  <path d="M2 8h2v4h-2z" fill="#7a9a7a" />
                </svg>
                CPM2*
              </div>
              <ul className="ml-2 text-black">
                {areas.map((a, i) => (
                  <li key={a} className="flex h-[18px] items-center">
                    <svg width="10" height="18" viewBox="0 0 10 18" aria-hidden="true">
                      <path
                        d={i === areas.length - 1 ? "M.5 0v9.500h9.500" : "M.5 0v18M.5 9.500h9.500"}
                        fill="none"
                        stroke="#888"
                        strokeDasharray="1 1"
                      />
                    </svg>
                    <MemChip open={a === "AR"} />
                    <span className={a === "AR" ? "ml-1 bg-[#f0f0f0] px-0.5 leading-4" : "ml-1 px-0.5 leading-4"}>{a}</span>
                  </li>
                ))}
              </ul>
            </div>
            <div className="flex h-[26px] items-start pl-2 font-['DejaVu_Sans_Condensed','DejaVu_Sans',sans-serif] text-[11px] text-black">
              <button className="flex h-6 w-[80px] items-center gap-0.5 rounded-b-sm border-r-2 border-b-2 border-black bg-[#f0f0f0] pl-1.5">
                <MemChip />
                Memoria
              </button>
              <button className="flex h-[21px] w-[71px] items-center gap-1 rounded-b-sm border-r-2 border-b-2 border-[#222] pl-1">
                <svg width="14" height="11" viewBox="0 0 14 11" aria-hidden="true">
                  <path d="M.5.5h9l4 5-4 5h-9z" fill="#f0f020" stroke="#000" />
                  <path d="M2 3.500h6M2 5.500h4M2 7.500h6" stroke="#000" />
                </svg>
                Direcci·
              </button>
            </div>
          </aside>
          <div className="relative flex-1 overflow-hidden border-t-2 border-[#666] bg-[#a0a0a0]">
            <ArWindow />
          </div>
        </div>
        <footer className="flex h-[22px] items-center gap-[3px] border-t border-[#b4b4b4] pt-0.5 pl-px text-black">
          <span className="flex-1 leading-4">Listo</span>
          <StatusCell w="w-[74px]">AR0</StatusCell>
          <StatusCell w="w-[191px]">CPM2*</StatusCell>
          <StatusCell w="w-[74px]">Offline</StatusCell>
          <StatusCell w="w-[31px]" />
          <StatusCell w="w-[33px]">NUM</StatusCell>
          <StatusCell w="w-[36px]" />
          <SizeGrip />
        </footer>
      </div>
    </section>
  );
}

export default function App() {
  return (
    <div className="relative flex h-screen min-h-[560px] flex-col overflow-hidden bg-linear-to-b from-[#9cb2d4] via-[#48668f] to-[#3c5480] px-1.5 pb-[3px] font-['Open_Sans','Noto_Sans',sans-serif] text-[12px] text-black">
      <header className="-mx-1.5 flex h-[29px] shrink-0 items-center border-t-2 border-[#0c1830] bg-[linear-gradient(90deg,#a8bcd8_0%,#8ca4cc_24%,#24448a_30%,#24448a_40%,#4a70b0_46%,#4a70b0_54%,#2a4a88_56%,#24407a_60%,#4a70b0_62%,#24407a_66%,#4a70b0_70%,#24407a_74%,#24407a_86%,#6484bc_92%,#a4b8dc_100%)] pr-2 pl-[7px]">
        <Glyph layers={icons.app} />
        <h1 className="ml-[5px] flex-1 [text-shadow:0_0_6px_#e4ecf8,0_0_8px_#e4ecf8,0_0_14px_#e4ecf8]">
          Sin título - CX-Programmer - [NuevoPLC1 [Símbolos]]
        </h1>
        <div className="flex h-[18px] self-start overflow-hidden rounded-b-md border border-t-0 border-[#a0b4d8]">
          <button aria-label="Minimizar" className="flex w-7 items-center justify-center border-r border-[#a0b4d8] bg-[#3f5c98]">
            <CaptionGlyph kind="min" />
          </button>
          <button aria-label="Maximizar" className="flex w-7 items-center justify-center border-r border-[#a0b4d8] bg-[#4a68a4]">
            <CaptionGlyph kind="max" />
          </button>
          <button aria-label="Cerrar" className="flex w-[45px] items-center justify-center bg-[#5876b0]">
            <CaptionGlyph kind="close" />
          </button>
        </div>
      </header>
      <main className="flex min-h-0 flex-1 flex-col border border-[#44546c] bg-[#f0f0f0]">
        <nav className="flex h-[20px] shrink-0 items-center border-b border-[#a0a0a0] bg-linear-to-b from-white to-[#dce0ec] pl-[7px] text-[#777]">
          <Glyph layers={icons.ladder} />
          <div className="ml-[7px] flex flex-1 gap-[11px]">
            {["Archivo", "Editar", "Ver", "Insertar", "PLC", "Programa", "Simulación", "Herramientas", "Ventana", "Ayuda"].map((m) => (
              <a key={m} href="#" className="pt-px leading-4">
                {m}
              </a>
            ))}
          </div>
          <div className="flex gap-px pr-px">
            {["M5 10.500h5", "M4.500 7.500h5v4h-5zM6.500 5.500v-2h5v5h-2M4.500 8.500h5", "M5 4l5 6M10 4l-5 6"].map((d, i) => (
              <button key={i} aria-label={["Minimizar documento", "Restaurar documento", "Cerrar documento"][i]} className="h-4 w-[18px] border border-[#b4c4d8] bg-[#f4f8fc]">
                <svg width="16" height="14" viewBox="0 0 16 14" aria-hidden="true">
                  <path d={d} fill="none" stroke="#8494a8" strokeWidth={i === 1 ? 1 : 2} />
                </svg>
              </button>
            ))}
          </div>
        </nav>

        <MainBar
          pad="w-[815px]"
          left={["doc", "open", "save", null, "print"]}
          right={["tool1", "tool2", null, "plcG1", "plcG2", "plcG3", "plcG4", null, "stepG", "wave", null, "tool3", "tool4"]}
        />
        <MainBar
          pad="w-[806px]"
          left={["zoomSG", "zoomXG", "zoomLG", "zoomSG"]}
          right={["arrowDoc", null, "tree", null, "hh", "docZ", "docXX", "docV"]}
        />
        <MainBar
          pad="w-[802px]"
          left={["wnd", "hammer", "plot", "links"]}
          right={["chipG", "chipG2", "chipG3", "rungA", "rungB", "rungC", "rungD", "rungE", null, "corner"]}
        />
        <div className="flex h-[30px] shrink-0 items-center">
          <Grip />
          <FlatTool name="outdent" />
          <FlatTool name="indent" />
          <Sep />
          <FlatTool name="lines" />
          <FlatTool name="lines" />
        </div>

        <div className="flex min-h-0 flex-1 gap-3 pl-1">
          <aside className="flex w-[291px] shrink-0 flex-col">
            <div className="mt-2 mb-[3px] h-[6px] shrink-0 border-y-2 border-[#b4b4b4] bg-white" />
            <div className="flex min-h-0 flex-1 flex-col border-t-2 border-l-2 border-[#777] bg-white">
              <ProjectTree />
              <div className="flex h-[18px] shrink-0 bg-[#f0f0f0]">
                <button className="relative flex h-[17px] w-[64px] items-center bg-white pl-[9px]">
                  <svg width="64" height="17" viewBox="0 0 64 17" className="absolute top-0 left-0" aria-hidden="true">
                    <path d="M0 0L6 16H54L61 0H64V17H0Z" fill="#f0f0f0" />
                    <path d="M0 0L6 16M54 16L61 .5H64" fill="none" stroke="#000" />
                    <path d="M6 16.500H54" stroke="#777" />
                  </svg>
                  <span className="relative text-[11px]">Proyecto</span>
                </button>
                <span className="flex-1 border-t border-black" />
              </div>
            </div>
          </aside>
          <div className="min-w-0 flex-1 overflow-hidden border-t border-l-2 border-[#666] bg-white">
            <SymbolTable />
          </div>
        </div>
        <footer className="flex h-[22px] shrink-0 items-center gap-[3px] border-t border-[#b4b4b4] pt-0.5 pl-0.5">
          <span className="flex-1 leading-4">Pulsar F1, para Ayuda</span>
          <StatusCell w="w-[19px]" />
          <StatusCell w="w-[65px]" />
          <StatusCell w="w-[255px]">NuevoPLC1(Red:0,Nodo:0) - Offline</StatusCell>
          <StatusCell w="w-[55px]" />
          <StatusCell w="w-[55px]" />
          <StatusCell w="w-[130px]">línea de programa 0 (0, 0)</StatusCell>
          <StatusCell w="w-[105px]" />
          <StatusCell w="w-[60px]">Clásico</StatusCell>
          <StatusCell w="w-[31px]" />
          <StatusCell w="w-[38px]">NUM</StatusCell>
          <SizeGrip />
        </footer>
      </main>
      <MemoryWindow />
      <svg width="14" height="20" viewBox="0 0 14 20" className="absolute top-[318px] left-[434px]" aria-hidden="true">
        <path d="M1 1v15l3.500-3 2.500 6 2.500-1-2.500-5.500h5z" fill="#fff" stroke="#222" />
      </svg>
    </div>
  );
}
